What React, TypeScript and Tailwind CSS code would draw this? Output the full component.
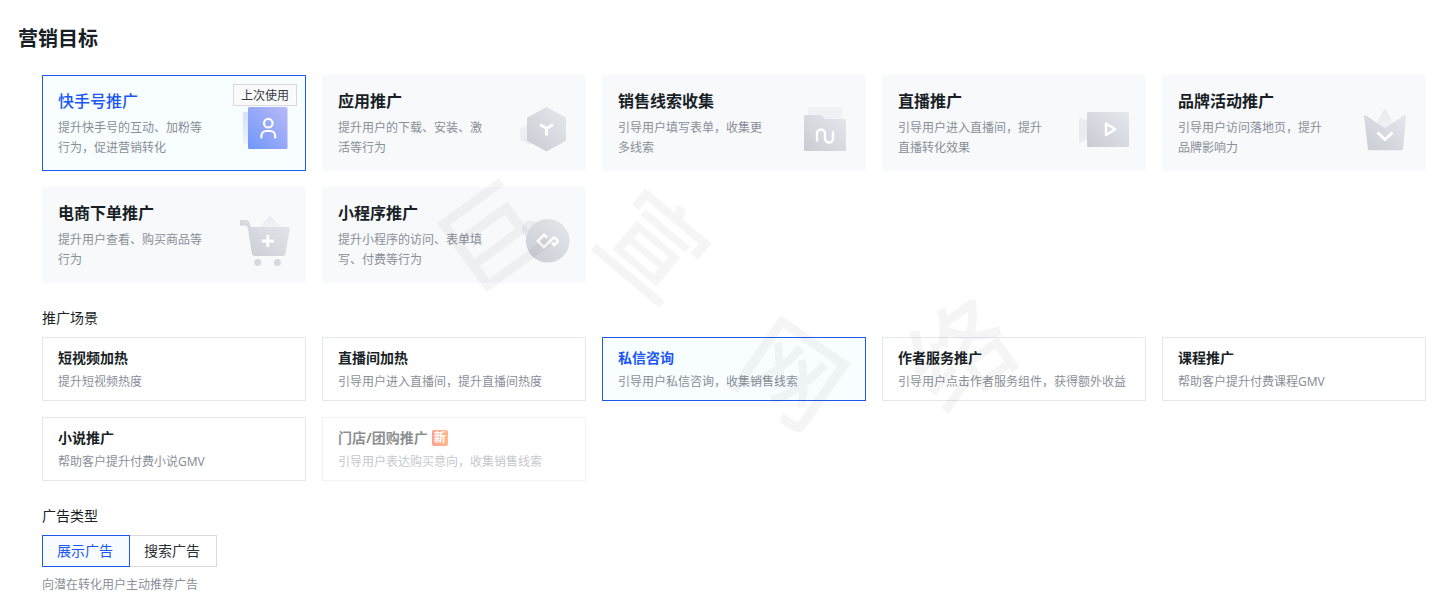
import React, { useState } from 'react';

interface Goal {
  id: string;
  title: string;
  description: string;
  icon: React.ReactNode;
  lastUsed?: boolean;
}

interface Scene {
  id: string;
  title: string;
  description: string;
  isNew?: boolean;
  disabled?: boolean;
}

const Icon: React.FC<{ children: React.ReactNode }> = ({ children }) => (
  <svg width="56" height="57" viewBox="0 0 56 57" fill="none" aria-hidden="true" className="shrink-0">
    {children}
  </svg>
);

// gradients shared by all goal icons
const IconDefs: React.FC = () => (
  <svg width="0" height="0" aria-hidden="true" className="absolute">
    <defs>
      <linearGradient id="gray" x1="0" y1="1" x2="1" y2="0">
        <stop offset="0" stopColor="#c9ccd2" />
        <stop offset="1" stopColor="#e4e7ec" />
      </linearGradient>
      <linearGradient id="ghost" x1="0" y1="0" x2="0" y2="1">
        <stop offset="0" stopColor="#e6e9ed" />
        <stop offset="1" stopColor="#f2f4f6" />
      </linearGradient>
      <linearGradient id="blue" x1="0" y1="1" x2="1" y2="0">
        <stop offset="0" stopColor="#7097fb" />
        <stop offset="1" stopColor="#b9b9f6" />
      </linearGradient>
      <linearGradient id="blueGhost" x1="0" y1="0" x2="0" y2="1">
        <stop offset="0" stopColor="#d3e1ff" />
        <stop offset="1" stopColor="#edf4ff" />
      </linearGradient>
    </defs>
  </svg>
);

const goals: Goal[] = [
  {
    id: 'account',
    title: '快手号推广',
    description: '提升快手号的互动、加粉等行为，促进营销转化',
    lastUsed: true,
    icon: (
      <Icon>
        <rect x="7" y="11" width="10" height="32" rx="1" fill="url(#blueGhost)" />
        <rect x="12" y="6" width="39.5" height="42" rx="1.5" fill="url(#blue)" />
        <g stroke="#fff" strokeWidth="2.2" strokeLinecap="round">
          <circle cx="32.3" cy="22.2" r="4.3" />
          <path d="M25.4 36.4V35a5 5 0 0 1 5-5h3.8a5 5 0 0 1 5 5v1.4" />
        </g>
      </Icon>
    ),
  },
  {
    id: 'app',
    title: '应用推广',
    description: '提升用户的下载、安装、激活等行为',
    icon: (
      <Icon>
        <path d="M4 28l8-4.6 8 4.6v10.5l-6 5.5-10-5.5z" fill="#eceef1" />
        <path
          d="M30.5 6.5l19 10.5v22.5l-19 10.5-19-10.5V17z"
          fill="url(#gray)"
          stroke="url(#gray)"
          strokeLinejoin="round"
        />
        <path d="M24 23.5l6.500 4 6.500-4M30.500 27.500v7" stroke="#fff" strokeWidth="2.8" />
      </Icon>
    ),
  },
  {
    id: 'leads',
    title: '销售线索收集',
    description: '引导用户填写表单，收集更多线索',
    icon: (
      <Icon>
        <rect x="12" y="6" width="34" height="20" fill="#eff1f4" />
        <path
          d="M9.5 14h15q1 0 1.6.8L28.500 18h20q1.500 0 1.500 1.500v29q0 1.500-1.500 1.500h-39Q8 50 8 48.500v-33Q8 14 9.500 14z"
          fill="url(#gray)"
        />
        <path
          d="M21 39.500V32.500a4 4 0 0 1 8 0v5a4 4 0 0 0 8 0V31"
          stroke="#fff"
          strokeWidth="2.4"
          strokeLinecap="round"
        />
      </Icon>
    ),
  },
  {
    id: 'live',
    title: '直播推广',
    description: '引导用户进入直播间，提升直播转化效果',
    icon: (
      <Icon>
        <path d="M3 18q0-1.500 1.500-1L12 19.500v18.500l-7.500 3.500Q3 42 3 40.500z" fill="#e9ebef" />
        <rect x="11" y="11" width="42" height="35" rx="1.5" fill="url(#gray)" />
        <path d="M30 22.500v11.500l9.300-5.800z" stroke="#fff" strokeWidth="2.4" strokeLinejoin="round" />
      </Icon>
    ),
  },
  {
    id: 'brand',
    title: '品牌活动推广',
    description: '引导用户访问落地页，提升品牌影响力',
    icon: (
      <Icon>
        <path d="M28.200 8.500q.8-1 1.600 0L38.500 24 29 30l-9.500-6z" fill="url(#ghost)" />
        <path
          d="M9.800 14.500L27.500 26.300q1.400.8 2.800 0L48.300 14.300q1.700-.6 1.700 1L47 48q-.2 1.300-1.500 1.300h-32Q12.200 49.300 12 48L8 15.500q0-1.700 1.800-1z"
          fill="url(#gray)"
        />
        <path d="M21.500 31.500l7.500 7 7.500-7" stroke="#fff" strokeWidth="2.8" />
      </Icon>
    ),
  },
  {
    id: 'commerce',
    title: '电商下单推广',
    description: '提升用户查看、购买商品等行为',
    icon: (
      <Icon>
        <path d="M34 3l12 12H22z" fill="url(#ghost)" />
        <path
          d="M4 7h5.500q3.500 0 4.500 3.500l1 3.500h37q2.200 0 1.800 2.200L49.300 41q-.5 2-2.500 2H18.500q-2 0-2.500-2l-4.300-26q-.4-2.300-2.500-2.300H4z"
          fill="url(#gray)"
        />
        <path d="M31.800 22v12M25.800 28h12" stroke="#fff" strokeWidth="2.8" />
        <circle cx="21.7" cy="49.5" r="3.5" fill="#d5d8de" />
        <circle cx="41.4" cy="49.5" r="3.5" fill="#d5d8de" />
      </Icon>
    ),
  },
  {
    id: 'miniapp',
    title: '小程序推广',
    description: '提升小程序的访问、表单填写、付费等行为',
    icon: (
      <Icon>
        <circle cx="14.5" cy="16" r="8.5" fill="#e9ebef" />
        <circle cx="31.7" cy="27.8" r="21.8" fill="url(#gray)" />
        <path
          d="M31 24.500L28 21.800 21.800 28l6.200 6.200 8.600-8.700q1.600-1.400 3.200 0l1.700 1.700q.8.800 0 1.600l-3.300 3.200-2.200-2"
          stroke="#fff"
          strokeWidth="2.4"
        />
      </Icon>
    ),
  },
];

const scenes: Scene[] = [
  { id: 'video', title: '短视频加热', description: '提升短视频热度' },
  { id: 'room', title: '直播间加热', description: '引导用户进入直播间，提升直播间热度' },
  { id: 'message', title: '私信咨询', description: '引导用户私信咨询，收集销售线索' },
  { id: 'author', title: '作者服务推广', description: '引导用户点击作者服务组件，获得额外收益' },
  { id: 'course', title: '课程推广', description: '帮助客户提升付费课程GMV' },
  { id: 'novel', title: '小说推广', description: '帮助客户提升付费小说GMV' },
  {
    id: 'store',
    title: '门店/团购推广',
    description: '引导用户表达购买意向，收集销售线索',
    isNew: true,
    disabled: true,
  },
];

const adTypes = ['展示广告', '搜索广告'];

const GoalCard: React.FC<{ goal: Goal; active: boolean; onSelect: () => void }> = ({ goal, active, onSelect }) => (
  <button
    type="button"
    aria-pressed={active}
    onClick={onSelect}
    className={`relative flex items-end justify-between border pt-[13px] pb-3 pl-[15px] pr-[13px] text-left ${
      active ? 'border-[#1f5bea] bg-[#f8fdff]' : 'border-[#f7f9fb] bg-[#f7f9fb]'
    }`}
  >
    <span className="block">
      <span
        className={`mb-[5px] block text-base leading-6 ${
          active ? 'font-medium text-[#1c57f5]' : 'font-bold text-[#191f26]'
        }`}
      >
        {goal.title}
      </span>
      <span className="block w-[152px] text-xs leading-5 text-[#898f98]">{goal.description}</span>
    </span>
    {goal.icon}
    {goal.lastUsed && (
      <span className="absolute right-2 top-2 border border-[#d9d9d9] bg-[#fafafa] px-[7px] pt-0.5 text-xs leading-[18px] text-[#333a44]">
        上次使用
      </span>
    )}
  </button>
);

const SceneCard: React.FC<{ scene: Scene; active: boolean; onSelect: () => void }> = ({ scene, active, onSelect }) => (
  <button
    type="button"
    aria-pressed={active}
    disabled={scene.disabled}
    onClick={onSelect}
    className={`border px-[15px] pt-[9px] pb-2 text-left disabled:opacity-50 ${
      active ? 'border-[#1f5bea] bg-[#f8fdff]' : 'border-[#e4e7ec] bg-white'
    }`}
  >
    <span
      className={`mb-[3px] flex items-center gap-1 text-sm leading-[22px] font-bold ${
        active ? 'text-[#1c57f5]' : 'text-[#191f26]'
      }`}
    >
      {scene.title}
      {scene.isNew && (
        <span className="size-4 rounded-xs bg-linear-to-r from-[#ff4422] to-[#ff7711] text-center text-xs leading-4 text-white">
          新
        </span>
      )}
    </span>
    <span className="block text-xs leading-5 text-[#898f98]">{scene.description}</span>
  </button>
);

const Watermark: React.FC = () => (
  <div
    aria-hidden="true"
    className="pointer-events-none absolute inset-0 select-none overflow-hidden text-[102px] leading-none font-medium text-black/4"
  >
    <span className="absolute left-[439px] top-[185px] -rotate-36">巨</span>
    <span className="absolute left-[603px] top-[194px] rotate-40">宣</span>
    <span className="absolute left-[741px] top-[322px] rotate-35">网</span>
    <span className="absolute left-[909px] top-[302px] -rotate-36">络</span>
  </div>
);

const App: React.FC = () => {
  const [goal, setGoal] = useState('account');
  const [scene, setScene] = useState('message');
  const [adType, setAdType] = useState('展示广告');

  return (
    <main className="relative bg-white pt-[25px] pb-4 pl-[18px] pr-[29px] font-['Noto_Sans','Noto_Sans_CJK_SC',sans-serif] text-[#191f26]">
      <IconDefs />
      <h1 className="mb-[22px] text-xl leading-7 font-bold">营销目标</h1>

      <div className="flex flex-col gap-6 pl-6">
        <section className="grid grid-cols-5 gap-4" aria-label="营销目标">
          {goals.map((g) => (
            <GoalCard key={g.id} goal={g} active={goal === g.id} onSelect={() => setGoal(g.id)} />
          ))}
        </section>

        <section>
          <h2 className="mb-2 text-sm leading-[22px]">推广场景</h2>
          <div className="grid grid-cols-5 gap-4">
            {scenes.map((s) => (
              <SceneCard key={s.id} scene={s} active={scene === s.id} onSelect={() => setScene(s.id)} />
            ))}
          </div>
        </section>

        <section>
          <h2 className="mb-2 text-sm leading-[22px]">广告类型</h2>
          <div className="flex">
            {adTypes.map((type) => (
              <button
                key={type}
                type="button"
                aria-pressed={adType === type}
                onClick={() => setAdType(type)}
                className={`h-8 border pl-[14px] pr-4 text-sm not-first:-ml-px ${
                  adType === type
                    ? 'relative z-10 border-[#1f5bea] bg-[#f8fbff] text-[#1c57f5]'
                    : 'border-[#d9d9d9] bg-white text-[#2a3038]'
                }`}
              >
                {type}
              </button>
            ))}
          </div>
          <p className="mt-2 text-xs leading-5 text-[#898f98]">向潜在转化用户主动推荐广告</p>
        </section>
      </div>

      <Watermark />
    </main>
  );
};

export default App;
